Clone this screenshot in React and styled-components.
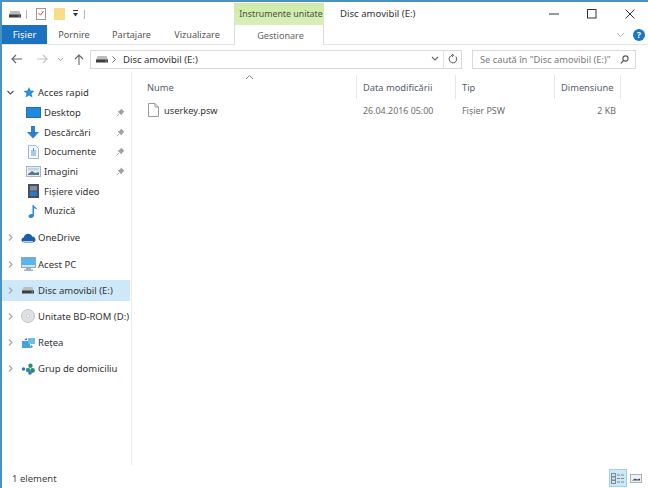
import React from 'react';
import styled, { createGlobalStyle } from 'styled-components';

const Global = createGlobalStyle`
  html, body { margin: 0; padding: 0; background: #fff; }
  * { box-sizing: border-box; }
`;
const Window = styled.div`
  width: 648px; height: 488px; display: flex; flex-direction: column; overflow: hidden;
  background: #fff; border-top: 2px solid #4a93c0; border-left: 2px solid #4a93c0;
  font-family: "Noto Sans", "Open Sans", sans-serif; font-size: 9.5px; color: #3a3a3a;
`;
const TitleBar = styled.div`display: flex; height: 23px; flex: none;`;
const QuickAccess = styled.div`width: 232px; display: flex; align-items: center; padding: 1px 0 0 6px; flex: none;`;
const Sep = styled.span`width: 1px; height: 9px; background: #b5b5b5; margin: 0 ${p => p.$gap || 7}px 0 ${p => p.$left || 6}px;`;
const ContextHead = styled.div`
  width: 90px; flex: none; background: linear-gradient(#cfeba8, #d8efb8); margin-top: 1px; white-space: nowrap;
  display: flex; align-items: center; justify-content: center; padding-left: 4px; color: #47533c; font-size: 8.8px;
`;
const Title = styled.div`flex: 1; padding-left: 16px; font-size: 9.6px; display: flex; align-items: center; color: #333;`;
const Controls = styled.div`display: flex; align-items: center; gap: 28px; padding-right: 13px;`;
const TabRow = styled.div`display: flex; height: 20px; flex: none; border-bottom: 1px solid #e4e4e4; align-items: stretch; font-size: 9.1px;`;
const FileTab = styled.div`
  width: 45px; background: #1a72c0; color: #fff; display: flex; align-items: center; justify-content: center; font-size: 9.5px;
`;
const Tab = styled.div`width: ${p => p.$w}px; display: flex; align-items: center; justify-content: center; color: #555;`;
const ContextTab = styled(Tab)`
  margin-left: 2px; padding-left: 3px; border-left: 1px solid #dcdcdc; border-right: 1px solid #dcdcdc; color: #666; height: 20px; background: #fff;
`;
const RibbonEnd = styled.div`flex: 1; display: flex; align-items: center; justify-content: flex-end; gap: 8px; padding-right: 3px;`;
const Help = styled.div`
  width: 12px; height: 12px; border-radius: 50%; background: #1c76c4; color: #fff; font-weight: 700;
  font-size: 9px; display: flex; align-items: center; justify-content: center;
`;
const NavBar = styled.div`display: flex; align-items: center; height: 27px; flex: none; padding-top: 1px;`;
const NavButtons = styled.div`width: 88px; flex: none; display: flex; align-items: center; padding-left: 9px; gap: 10px;`;
const Address = styled.div`
  width: 372px; height: 19px; border: 1px solid #d9d9d9; display: flex; align-items: center; padding-left: 4px; flex: none; color: #333;
`;
const Crumb = styled.span`flex: 1; margin-left: 2px; display: flex; align-items: center; gap: 6px;`;
const Refresh = styled.span`
  width: 18px; height: 100%; border-left: 1px solid #e2e2e2; display: flex; align-items: center; justify-content: center; margin-left: 4px;
`;
const Search = styled.div`
  width: 164px; margin-left: 10px; height: 19px; border: 1px solid #d9d9d9; display: flex; align-items: center;
  justify-content: space-between; padding: 0 6px 0 7px; color: #7a7a7a; font-size: 9.3px; flex: none; white-space: nowrap;
`;
const Main = styled.div`flex: 1; display: flex; min-height: 0;`;
const Sidebar = styled.div`width: 130px; flex: none; border-right: 1px solid #eaeaea; padding-top: 11px;`;
const Group = styled.div`margin-bottom: 4px;`;
const Row = styled.div`
  height: ${p => p.$h || 19.7}px; display: flex; align-items: center; white-space: nowrap; color: #333;
  padding-left: ${p => p.$child ? 23 : 3}px; background: ${p => p.$active ? '#cde8f9' : 'transparent'};
  margin: ${p => p.$active ? '2.6px 0' : '0'};
  width: 128px;
`;
const Arrow = styled.span`width: 11px; display: flex; align-items: center; justify-content: center; margin-right: 4px; flex: none;`;
const IconSlot = styled.span`width: 16px; height: 14px; display: flex; align-items: center; justify-content: center; margin-right: ${p => p.$m ?? 2}px; flex: none;`;
const Grow = styled.span`flex: 1;`;
const Pin = styled.span`display: flex; width: 12px; margin-right: 2px;`;
const Content = styled.div`flex: 1; display: flex; flex-direction: column; position: relative;`;
const Grid = styled.div`
  display: grid; grid-template-columns: 225px 99px 99px 66px; align-items: center;
`;
const Header = styled(Grid)`height: 24px; margin-top: 3px; color: #56606a; font-size: 9.3px;`;
const HeadCell = styled.div`
  height: 24px; padding-left: ${p => p.$first ? 15 : 6}px; display: flex; align-items: center;
  border-right: 1px solid #e6e6e6;
`;
const FileRow = styled(Grid)`height: 20px; margin-top: 1px;`;
const NameCell = styled.div`padding-left: 16px; display: flex; align-items: center; gap: 5px; color: #333; font-size: 9.3px;`;
const MetaCell = styled.div`
  padding-left: 6px; color: #6d6d6d; font-size: 8.9px;
  ${p => p.$right && 'text-align: right; padding-right: 5px;'}
`;
const SortMark = styled.span`position: absolute; left: 113px; top: 2px; display: flex;`;
const Status = styled.div`height: 23px; flex: none; display: flex; align-items: center; justify-content: space-between; padding: 4px 6px 0 10px; color: #444;`;
const Views = styled.div`display: flex; align-items: center; gap: 3px; margin-top: -1px;`;
const ViewBtn = styled.span`
  width: ${p => p.$on ? 18 : 12}px; height: 18px; display: flex; align-items: center; justify-content: center;
  ${p => p.$on && 'background: #cde8f9; border: 1px solid #9fd0ee;'}
`;

const Drive = () => (
  <svg width="14" height="8" viewBox="0 0 14 8"><path d="M2.5 1h9L13 5H1z" fill="#bcbcbc"/><rect x="1" y="4.5" width="12" height="3" fill="#3d3d3d"/><rect x="10.5" y="5.5" width="1.5" height="1" fill="#9ad"/></svg>
);
const Chev = ({ open }) => (
  <svg width="9" height="9" viewBox="0 0 9 9" fill="none" stroke={open ? '#555' : '#a6a6a6'} strokeWidth="1.2">
    {open ? <path d="M1.5 3l3 3 3-3"/> : <path d="M3 1.5l3 3-3 3"/>}
  </svg>
);
const PinIcon = () => (
  <svg width="9" height="9" viewBox="0 0 9 9"><path d="M5 .5L8.5 4 7.3 4.5 5.8 6.4 5.5 7.6 1.6 3.6 2.8 3.3 4.6 1.7z" fill="#a0a0a0"/><path d="M3 6L.8 8.3" stroke="#a0a0a0" strokeWidth=".9"/></svg>
);

const icons = {
  star: <svg width="13" height="13" viewBox="0 0 13 13"><path d="M7 1l1.6 3.600 3.900.4-2.900 2.600.8 3.900L7 9.500l-3.400 2 .8-3.900L1.500 5l3.900-.4z" fill="#2f8fd6"/></svg>,
  desktop: <svg width="15" height="11" viewBox="0 0 15 11"><rect x=".5" y=".5" width="14" height="10" fill="#1b8be0" stroke="#2a6ca8"/></svg>,
  down: <svg width="14" height="14" viewBox="0 0 14 14"><path d="M5 1h4v6h4l-6 6.500L1 7h4z" fill="#2f7fd0"/></svg>,
  docs: <svg width="11" height="14" viewBox="0 0 11 14"><path d="M.5.500h7l3 3v10H.5z" fill="#f4f8fc" stroke="#a9b8c6"/><path d="M3 6h5M3 8h5M3 10h5M5.500 3v3" stroke="#5d9ad0"/></svg>,
  img: <svg width="15" height="11" viewBox="0 0 15 11"><rect x=".5" y=".5" width="14" height="10" fill="#e6eef5" stroke="#a8b4c0"/><path d="M2 8l4-3 3 2 4-1v3H2z" fill="#5d7488"/><rect x="2" y="2" width="11" height="2.500" fill="#bcd6ec"/></svg>,
  video: <svg width="11" height="14" viewBox="0 0 11 14"><rect width="11" height="14" fill="#4a4f58"/><rect x="2" y="2" width="7" height="4.500" fill="#7e90a8"/><rect x="2" y="7.500" width="7" height="4.500" fill="#2f78c8"/></svg>,
  music: <svg width="11" height="14" viewBox="0 0 11 14"><path d="M4.500 1h1.200c.3 2 3.300 2.500 4 5-1.200-1.200-2.500-1.700-3.700-1.800V11.500C6 13 4.500 14 2.800 14 1.300 14 .5 13.200.5 12.200.5 11 2 10 3.300 10c.5 0 .9.100 1.200.2z" fill="#2a8bd8"/></svg>,
  cloud: <svg width="15" height="10" viewBox="0 0 15 10"><path d="M3.500 9.500C1.500 9.500.5 8.300.5 7c0-1.300 1-2.300 2.200-2.400C3.200 2.500 5 .8 7.200.8c1.800 0 3.300 1 4 2.600 1.900.1 3.300 1.500 3.300 3.100 0 1.700-1.300 3-3 3z" fill="#1b5fa8"/><path d="M2 8.500h10" stroke="#fff" strokeWidth=".7"/></svg>,
  pc: <svg width="15" height="14" viewBox="0 0 15 14"><rect x=".5" y=".5" width="14" height="10" fill="#58b6ea" stroke="#8fa6b8"/><path d="M1 8h13v2H1z" fill="#cfe6f4"/><path d="M5 11h5v1.500h2V14H3v-1.500h2z" fill="#a7b4bf"/></svg>,
  disc: <svg width="14" height="14" viewBox="0 0 14 14"><circle cx="7" cy="7" r="6.500" fill="#dfe1e3" stroke="#bfc2c5"/><circle cx="7" cy="7" r="1.800" fill="#eef0f1" stroke="#d0d3d5"/></svg>,
  net: <svg width="15" height="13" viewBox="0 0 15 13"><rect x="1" y="5" width="8" height="7" fill="#43a3e0"/><path d="M7 2h7v6H7z" fill="#6dbcec"/><path d="M3 4l3-2v2zM10 9l2 2-3 1z" fill="#2f7cb8"/></svg>,
  home: <svg width="15" height="12" viewBox="0 0 15 12"><circle cx="2.500" cy="6" r="1.700" fill="#2a74c4"/><circle cx="9.500" cy="2.800" r="2.200" fill="#2b8f6c"/><circle cx="7" cy="7" r="2.200" fill="#2a9a78"/><circle cx="11.500" cy="7.500" r="2.400" fill="#2b8f6c"/><circle cx="9" cy="10" r="1.800" fill="#2a74c4"/></svg>,
};

const pinned = [['desktop', 'Desktop'], ['down', 'Descărcări'], ['docs', 'Documente'], ['img', 'Imagini']];
const others = [['cloud', 'OneDrive'], ['pc', 'Acest PC'], [null, 'Disc amovibil (E:)', true], ['disc', 'Unitate BD-ROM (D:)'], ['net', 'Rețea'], ['home', 'Grup de domiciliu']];

export default function App() {
  return (
    <Window>
      <Global />
      <TitleBar>
        <QuickAccess>
          <Drive /><Sep $left={4} $gap={9} />
          <svg width="10" height="12" viewBox="0 0 10 12"><rect x=".5" y=".5" width="9" height="11" fill="#fff" stroke="#9a9a9a"/><path d="M2.500 5l2 2.200L7.500 3" stroke="#d0492f" fill="none"/></svg>
          <svg style={{ marginLeft: 8 }} width="11" height="12" viewBox="0 0 11 12"><rect width="11" height="12" fill="#f9dc85"/></svg>
          <svg style={{ marginLeft: 7 }} width="7" height="8" viewBox="0 0 7 8"><rect x="1" y="0" width="5" height="1" fill="#333"/><path d="M1 3h5L3.500 6.500z" fill="#333"/></svg>
          <Sep $left={5} />
        </QuickAccess>
        <ContextHead>Instrumente unitate</ContextHead>
        <Title>Disc amovibil (E:)</Title>
        <Controls>
          <svg width="10" height="10" viewBox="0 0 10 10"><path d="M0 5h10" stroke="#333"/></svg>
          <svg width="10" height="10" viewBox="0 0 10 10"><rect x=".5" y=".5" width="8.500" height="8.500" fill="none" stroke="#333"/></svg>
          <svg width="10" height="10" viewBox="0 0 10 10"><path d="M.5.500l9 9M9.500.500l-9 9" stroke="#333"/></svg>
        </Controls>
      </TitleBar>
      <TabRow>
        <FileTab>Fișier</FileTab>
        <Tab $w={54}>Pornire</Tab>
        <Tab $w={61}>Partajare</Tab>
        <Tab $w={70}>Vizualizare</Tab>
        <ContextTab $w={90}>Gestionare</ContextTab>
        <RibbonEnd>
          <svg width="9" height="9" viewBox="0 0 9 9" fill="none" stroke="#b5b5b5"><path d="M1 3l3.500 3.500L8 3"/></svg>
          <Help>?</Help>
        </RibbonEnd>
      </TabRow>
      <NavBar>
        <NavButtons>
          <svg width="11" height="10" viewBox="0 0 11 10" fill="none" stroke="#666" strokeWidth="1.1"><path d="M11 5H1M5 1L1 5l4 4"/></svg>
          <svg style={{ marginLeft: 5 }} width="11" height="10" viewBox="0 0 11 10" fill="none" stroke="#c4c4c4" strokeWidth="1.1"><path d="M0 5h10M6 1l4 4-4 4"/></svg>
          <svg style={{ marginLeft: -1 }} width="7" height="5" viewBox="0 0 7 5" fill="none" stroke="#999"><path d="M1 1l2.500 2.500L6 1"/></svg>
          <svg width="10" height="11" viewBox="0 0 10 11" fill="none" stroke="#666" strokeWidth="1.1"><path d="M5 11V1M1 5l4-4 4 4"/></svg>
        </NavButtons>
        <Address>
          <Drive />
          <Crumb>
            <svg width="6" height="7" viewBox="0 0 6 7" fill="none" stroke="#666"><path d="M1.500.500l3 3-3 3"/></svg>
            Disc amovibil (E:)
          </Crumb>
          <svg width="8" height="6" viewBox="0 0 8 6" fill="none" stroke="#666" strokeWidth="1.1"><path d="M1 1l3 3 3-3"/></svg>
          <Refresh>
            <svg width="10" height="10" viewBox="0 0 10 10" fill="none" stroke="#555"><path d="M7.800 2.600A3.800 3.800 0 1 1 4.500 1.300"/><path d="M4 .2l1.800 1.200L4 2.800" /></svg>
          </Refresh>
        </Address>
        <Search>
          Se caută în "Disc amovibil (E:)"
          <svg width="9" height="9" viewBox="0 0 9 9" fill="none" stroke="#555" strokeWidth="1.1"><circle cx="5.500" cy="3.500" r="2.600"/><path d="M3.500 5.500L.8 8.300"/></svg>
        </Search>
      </NavBar>
      <Main>
        <Sidebar>
          <Group>
            <Row><Arrow><Chev open /></Arrow><IconSlot>{icons.star}</IconSlot>Acces rapid</Row>
            {pinned.map(([ic, t]) => (
              <Row $child key={t}><IconSlot $m={3}>{icons[ic]}</IconSlot>{t}<Grow /><Pin><PinIcon /></Pin></Row>
            ))}
            <Row $child><IconSlot $m={3}>{icons.video}</IconSlot>Fișiere video</Row>
            <Row $child><IconSlot $m={3}>{icons.music}</IconSlot>Muzică</Row>
          </Group>
          {others.map(([ic, t, active]) => (
            <Row key={t} $h={active ? 21 : 26.2} $active={active}>
              <Arrow><Chev /></Arrow><IconSlot>{ic ? icons[ic] : <Drive />}</IconSlot>{t}
            </Row>
          ))}
        </Sidebar>
        <Content>
          <SortMark>
            <svg width="9" height="6" viewBox="0 0 9 6" fill="none" stroke="#888"><path d="M1 5l3.500-3.500L8 5"/></svg>
          </SortMark>
          <Header>
            <HeadCell $first>Nume</HeadCell>
            <HeadCell>Data modificării</HeadCell>
            <HeadCell>Tip</HeadCell>
            <HeadCell>Dimensiune</HeadCell>
          </Header>
          <FileRow>
            <NameCell>
              <svg width="11" height="14" viewBox="0 0 11 14"><path d="M.5.500h6.500l3.500 3.500v9.500H.5z" fill="#fff" stroke="#9a9a9a"/><path d="M7 .5v3.500h3.500" fill="none" stroke="#9a9a9a"/></svg>
              userkey.psw
            </NameCell>
            <MetaCell>26.04.2016 05:00</MetaCell>
            <MetaCell>Fișier PSW</MetaCell>
            <MetaCell $right>2 KB</MetaCell>
          </FileRow>
        </Content>
      </Main>
      <Status>
        1 element
        <Views>
          <ViewBtn $on>
            <svg width="14" height="11" viewBox="0 0 14 11" fill="none" stroke="#7d8a96"><rect x=".5" y=".5" width="4" height="3"/><rect x=".5" y="4" width="4" height="3"/><rect x=".5" y="7.500" width="4" height="3"/><path d="M6 2h7M6 5.500h7M6 9h7" strokeDasharray="3 1"/></svg>
          </ViewBtn>
          <ViewBtn>
            <svg width="12" height="9" viewBox="0 0 12 9"><rect x=".5" y=".5" width="11" height="8" fill="#eef2f5" stroke="#a8b2bb"/><path d="M2 6.500l3-2 2 1 3-1v2z" fill="#3f4c58"/></svg>
          </ViewBtn>
        </Views>
      </Status>
    </Window>
  );
}
